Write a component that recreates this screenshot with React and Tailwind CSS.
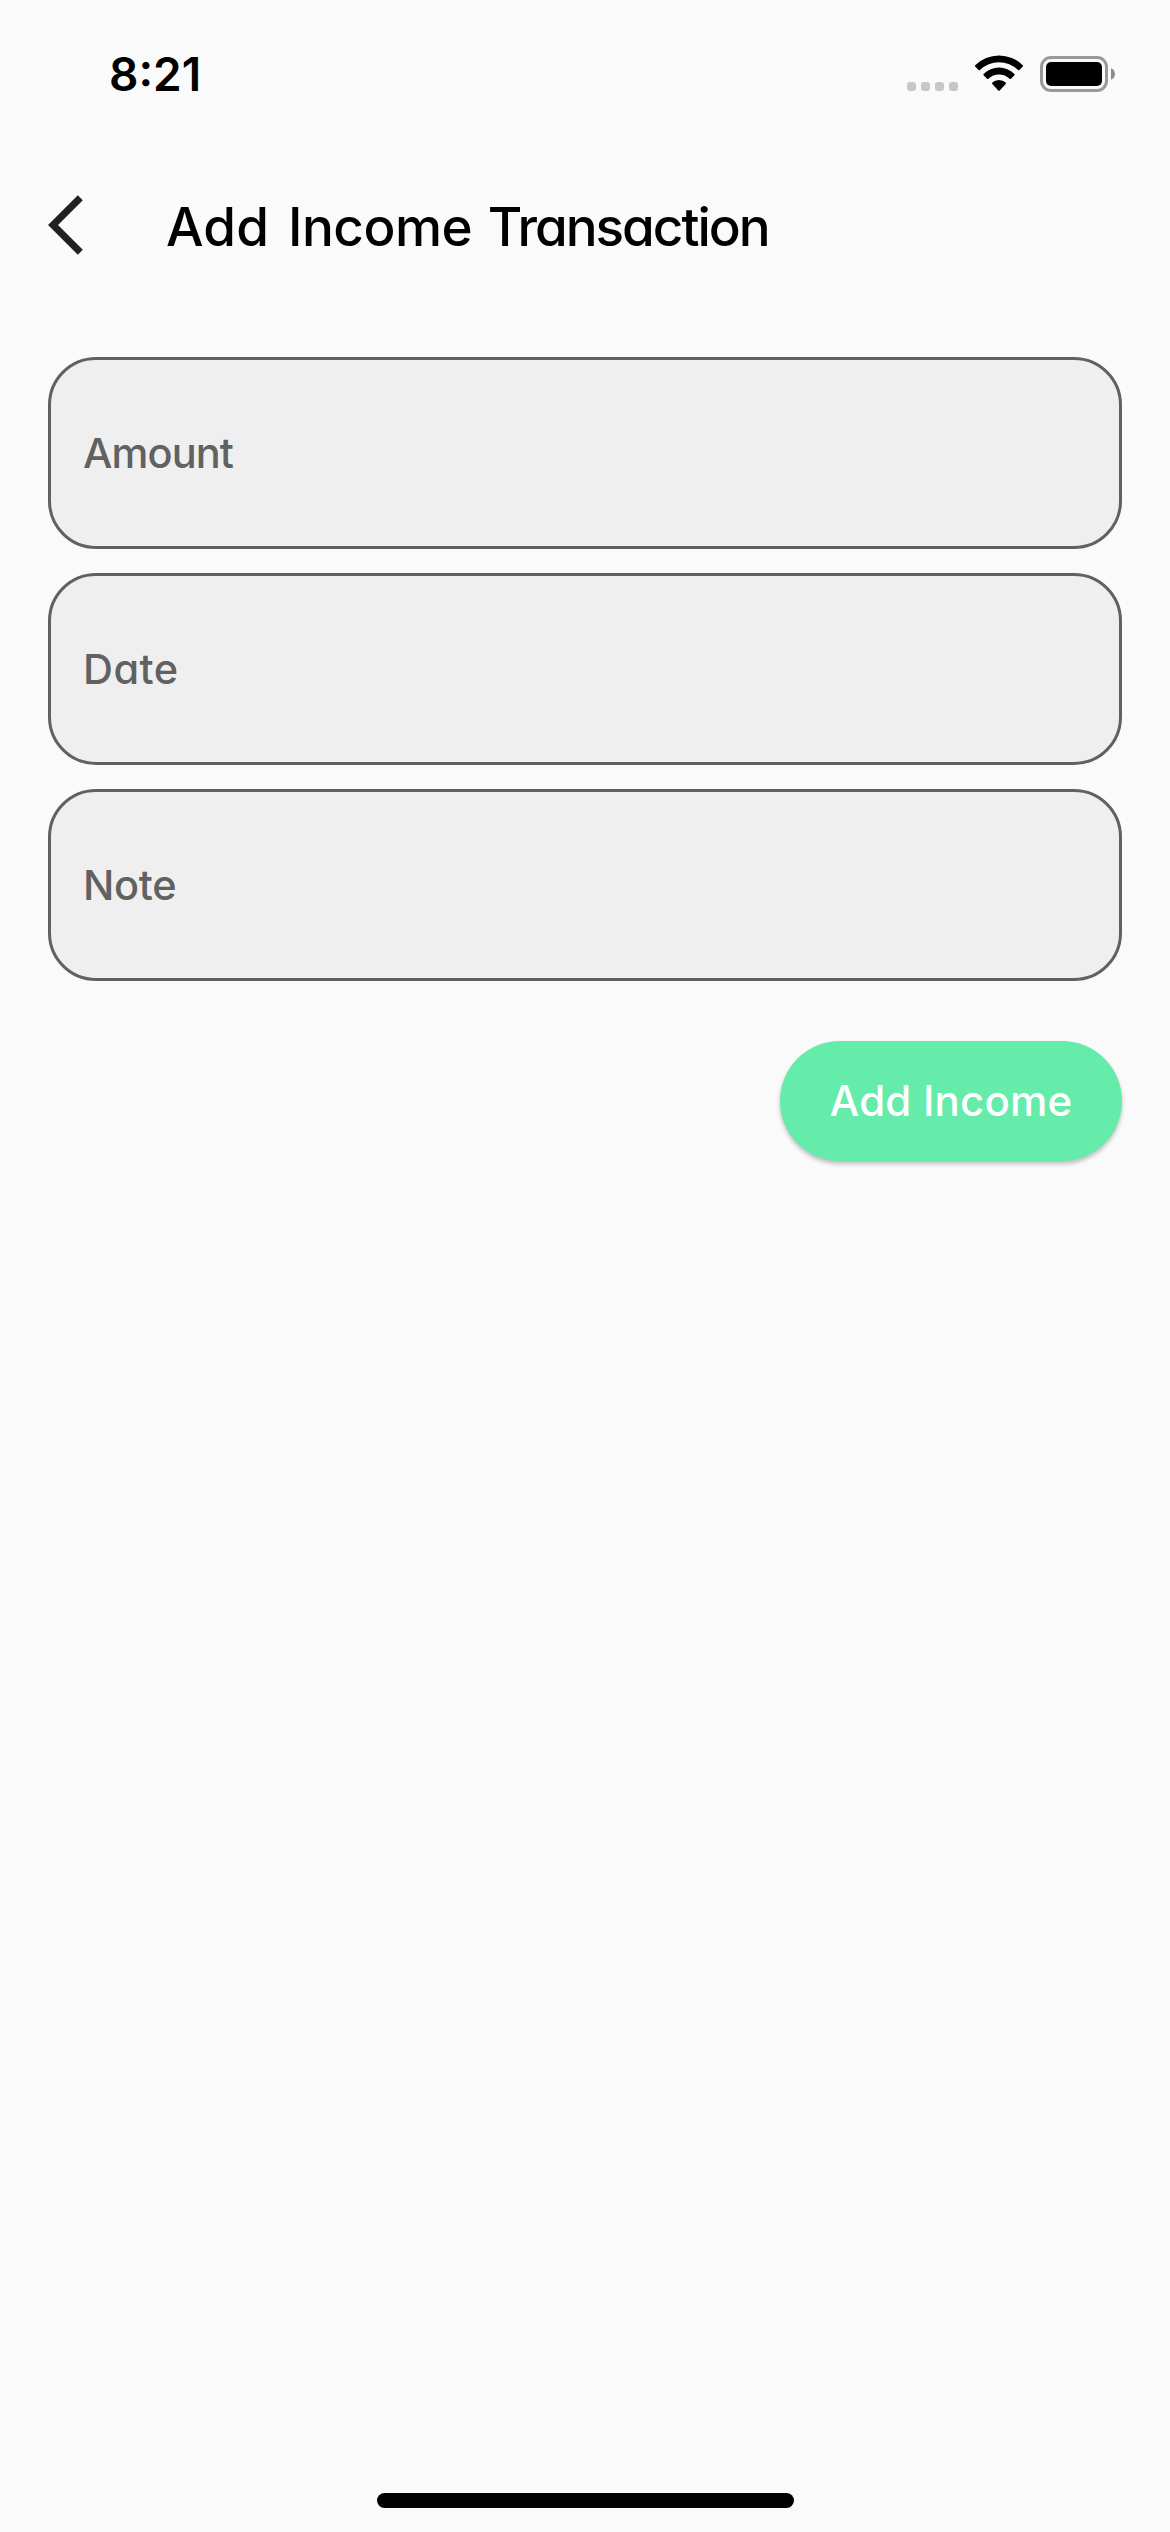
const ROUNDED = "font-['Inter',sans-serif] [font-feature-settings:'cv11']";

function SignalDots() {
  return (
    <div className="flex gap-[5px]">
      {[0, 1, 2, 3].map((i) => (
        <span key={i} className="size-[9px] rounded-[3px] bg-[#c7c7c7]" />
      ))}
    </div>
  );
}

function WifiIcon() {
  return (
    <svg width="50" height="38" viewBox="974 54 50 38" className="block">
      <path d="M975.2 65.2 A34 34 0 0 1 1022.8 65.2 Q1023.4 65.9 1022.8 66.6 L1019.4 70 Q1018.7 70.6 1018 70 A27.2 27.2 0 0 0 980 70 Q979.3 70.6 978.6 70 L975.2 66.6 Q974.6 65.9 975.2 65.2Z" />
      <path d="M983.6 73.9 A22 22 0 0 1 1014.4 73.9 Q1015 74.6 1014.4 75.3 L1011 78.7 Q1010.3 79.3 1009.6 78.7 A15.4 15.4 0 0 0 988.4 78.7 Q987.7 79.3 987 78.7 L983.6 75.3 Q983 74.6 983.6 73.9Z" />
      <path d="M992.3 82.6 A10 10 0 0 1 1005.7 82.6 Q1006.3 83.3 1005.7 84 L999.7 90.4 Q999 91 998.3 90.4 L992.3 84 Q991.7 83.3 992.3 82.6Z" />
    </svg>
  );
}

function BatteryIcon() {
  return (
    <svg width="76" height="36" viewBox="0 0 76 36" className="block">
      <rect x="1.5" y="1.5" width="65" height="33" rx="9.5" fill="none" stroke="#999999" strokeWidth="3" />
      <rect x="6" y="6" width="56" height="24" rx="5" />
      <path d="M71 12.2 C76.3 14.5 76.3 21.5 71 23.8Z" fill="#8c8c8c" />
    </svg>
  );
}

function StatusBar() {
  return (
    <header className="flex h-[147px] items-start justify-between pr-[54px] pl-[109px]">
      <span className="mt-[46px] font-['Inter',sans-serif] text-[46px] leading-[56px] font-semibold">
        8:21
      </span>
      <div className="mt-[54px] flex items-start">
        <div className="mt-7">
          <SignalDots />
        </div>
        <div className="ml-4">
          <WifiIcon />
        </div>
        <div className="mt-0.5 ml-4">
          <BatteryIcon />
        </div>
      </div>
    </header>
  );
}

function AppBar() {
  return (
    <div className="flex h-[168px] items-start pl-12">
      <button type="button" aria-label="Back" className="mt-12">
        <svg width="35" height="60" viewBox="0 0 35 60" className="block">
          <path d="M0 30 L29.8 .2 L34.8 5.2 L10 30 L34.8 54.8 L29.8 59.8Z" fill="#212121" />
        </svg>
      </button>
      <h1 className={`${ROUNDED} mt-[48px] ml-[83px] text-[53px] leading-[64px] font-[450] whitespace-nowrap`}>
        <span className="tracking-[0.2px]">Add</span>
        <span className="tracking-[4.6px]"> </span>
        <span className="tracking-[-0.5px]">Income</span>
        <span className="tracking-[1.5px]"> </span>
        <span className="tracking-[-2px]">Transaction</span>
      </h1>
    </div>
  );
}

function Field({ label, tracking }) {
  return (
    <label className={`${ROUNDED} ${tracking} flex h-48 items-center rounded-[48px] border-[3px] border-[#616161] bg-[#efefef] pt-0.5 pl-[32px] text-[41.5px] leading-none font-[450] text-[#616161]`}>
      {label}
    </label>
  );
}

export default function App() {
  return (
    <div className="flex h-[2532px] w-[1170px] flex-col bg-[#fafafa] text-black">
      <StatusBar />
      <AppBar />
      <main className="mt-[42px] flex flex-1 flex-col gap-6 px-12">
        <Field label="Amount" tracking="tracking-[-0.9px]" />
        <Field label="Date" tracking="tracking-[0.5px]" />
        <Field label="Note" tracking="tracking-[-0.3px]" />
        <button
          type="button"
          className="mt-9 flex h-[120px] w-[342px] items-center justify-center self-end rounded-full bg-[#65ecab] font-['Inter',sans-serif] text-[42px] leading-none font-medium tracking-[0.2px] whitespace-nowrap text-white shadow-[0_3px_4px_rgba(0,0,0,0.24)]"
        >
          Add Income
        </button>
      </main>
      <div className="mb-6 h-[15px] w-[417px] self-center rounded-full bg-black" />
    </div>
  );
}
